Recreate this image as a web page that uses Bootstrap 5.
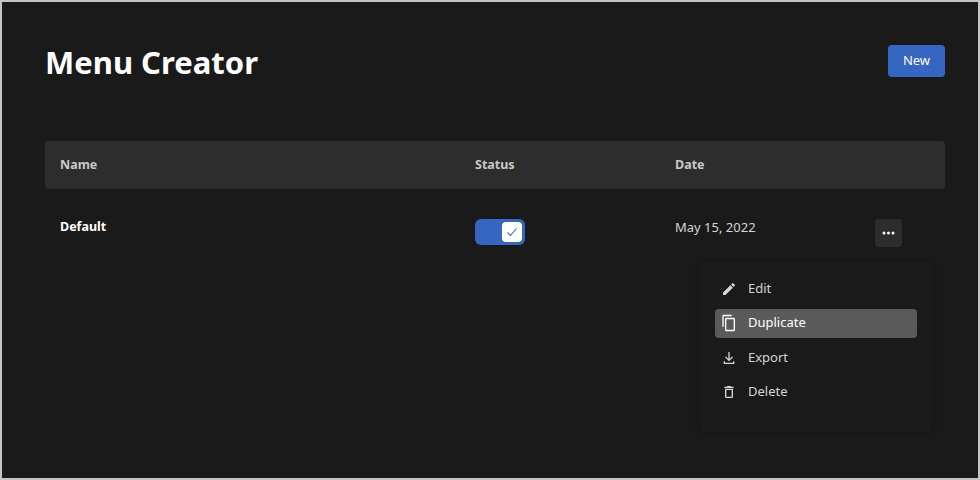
<!DOCTYPE html>
<html lang="en">

<head>
    <meta charset="UTF-8">
    <meta name="viewport" content="width=device-width, initial-scale=1.0">
    <title>Menu Creator</title>
    <link href="https://cdn.jsdelivr.net/npm/bootstrap@5.3.0/dist/css/bootstrap.min.css" rel="stylesheet">
    <style>
        html, body {
            height: 100%;
        }

        body {
            background: #1a1a1a;
            border: 2px solid #c4c4c4;
            overflow: hidden;
            font-family: "Noto Sans", "Liberation Sans", sans-serif;
            font-size: 13px;
            color: #d4d4d4;
        }

        .page {
            padding: 40px 33px 0 43px;
        }

        .page-title {
            font-size: 31px;
            font-weight: 700;
            line-height: 40px;
            color: #fff;
            margin: 0;
        }

        .btn-new {
            background: #3566c2;
            color: #fff;
            border: 0;
            border-radius: 4px;
            font-size: 13px;
            width: 57px;
            height: 32px;
            padding: 0;
            margin-top: 3px;
        }

        .table-head {
            background: #2d2d2d;
            border-radius: 4px;
            height: 48px;
            margin-top: 59px;
            font-weight: 700;
            font-size: 12.5px;
            color: #c9c9c9;
        }

        .col-name {
            width: 430px;
            padding-left: 15px;
            flex-shrink: 0;
        }

        .col-status {
            width: 200px;
            flex-shrink: 0;
        }

        .table-row {
            padding-top: 30px;
            position: relative;
        }

        .row-name {
            font-weight: 700;
            font-size: 12.5px;
            color: #fff;
            line-height: 16px;
        }

        .row-date {
            width: 200px;
            line-height: 16px;
        }

        .status-switch {
            width: 50px;
            height: 26px;
            background: #3566c2;
            border-radius: 6px;
            padding: 3px;
        }

        .status-knob {
            width: 20px;
            height: 20px;
            background: #fff;
            border-radius: 4px;
        }

        .btn-more {
            background: #2d2d2d;
            border: 0;
            border-radius: 4px;
            width: 27px;
            height: 28px;
            padding: 0;
        }

        .row-menu {
            display: block;
            position: absolute;
            top: 73px;
            right: 13px;
            left: auto;
            width: 232px;
            height: 170px;
            margin: 0;
            padding: 12px 15px;
            background: #1a1a1a;
            border: 0;
            border-radius: 4px;
            box-shadow: 0 0 6px rgba(0, 0, 0, .35);
        }

        .row-menu .dropdown-item {
            height: 29px;
            margin-bottom: 5.5px;
            padding: 0 6px;
            border-radius: 4px;
            color: #d4d4d4;
            font-size: 13px;
            gap: 11px;
        }

        .row-menu .dropdown-item.active {
            background: #5a5a5a;
            color: #fff;
        }

        .row-menu svg {
            fill: currentColor;
        }
    </style>
</head>

<body>
    <div class="page">
        <div class="d-flex justify-content-between align-items-start">
            <h1 class="page-title">Menu Creator</h1>
            <button class="btn btn-new">New</button>
        </div>

        <div class="table-head d-flex align-items-center">
            <div class="col-name">Name</div>
            <div class="col-status">Status</div>
            <div>Date</div>
        </div>

        <div class="table-row d-flex align-items-start">
            <div class="col-name row-name">Default</div>
            <div class="col-status">
                <div class="status-switch d-flex justify-content-end">
                    <div class="status-knob d-flex align-items-center justify-content-center">
                        <svg width="12" height="12" viewBox="0 0 12 12" fill="none" stroke="#3566c2" stroke-width="1.1">
                            <path d="M1.5 6.5l3 3 6-7" />
                        </svg>
                    </div>
                </div>
            </div>
            <div class="row-date">May 15, 2022</div>
            <button class="btn btn-more d-flex align-items-center justify-content-center" aria-label="More">
                <svg width="13" height="4" viewBox="0 0 13 4" fill="#fff">
                    <circle cx="2" cy="2" r="1.5" />
                    <circle cx="6.5" cy="2" r="1.5" />
                    <circle cx="11" cy="2" r="1.5" />
                </svg>
            </button>

            <div class="dropdown-menu row-menu">
                <a class="dropdown-item d-flex align-items-center" href="#">
                    <svg width="16" height="16" viewBox="0 0 24 24"><path d="M3 17.25V21h3.75L17.81 9.94l-3.75-3.75L3 17.25zM20.71 7.04a1 1 0 0 0 0-1.41l-2.34-2.34a1 1 0 0 0-1.41 0l-1.83 1.83 3.75 3.75 1.83-1.83z" /></svg>
                    Edit
                </a>
                <a class="dropdown-item active d-flex align-items-center" href="#">
                    <svg width="16" height="18" viewBox="0 0 24 24" preserveAspectRatio="none"><path d="M16 1H4c-1.1 0-2 .9-2 2v14h2V3h12V1zm3 4H8c-1.1 0-2 .9-2 2v14c0 1.1.9 2 2 2h11c1.1 0 2-.9 2-2V7c0-1.1-.9-2-2-2zm0 16H8V7h11v14z" /></svg>
                    Duplicate
                </a>
                <a class="dropdown-item d-flex align-items-center" href="#">
                    <svg width="16" height="16" viewBox="0 0 24 24"><path d="M11 3h2v10.2l3.6-3.6L18 11l-6 6-6-6 1.4-1.4 3.6 3.6zM4 17h2v2h12v-2h2v4H4z" /></svg>
                    Export
                </a>
                <a class="dropdown-item d-flex align-items-center" href="#">
                    <svg width="16" height="16" viewBox="0 0 24 24"><path d="M6 19c0 1.1.9 2 2 2h8c1.1 0 2-.9 2-2V7H6v12zM8 9h8v10H8V9zm7.5-5l-1-1h-5l-1 1H5v2h14V4z" /></svg>
                    Delete
                </a>
            </div>
        </div>
    </div>

    <script src="https://cdn.jsdelivr.net/npm/bootstrap@5.3.0/dist/js/bootstrap.bundle.min.js"></script>
</body>

</html>
